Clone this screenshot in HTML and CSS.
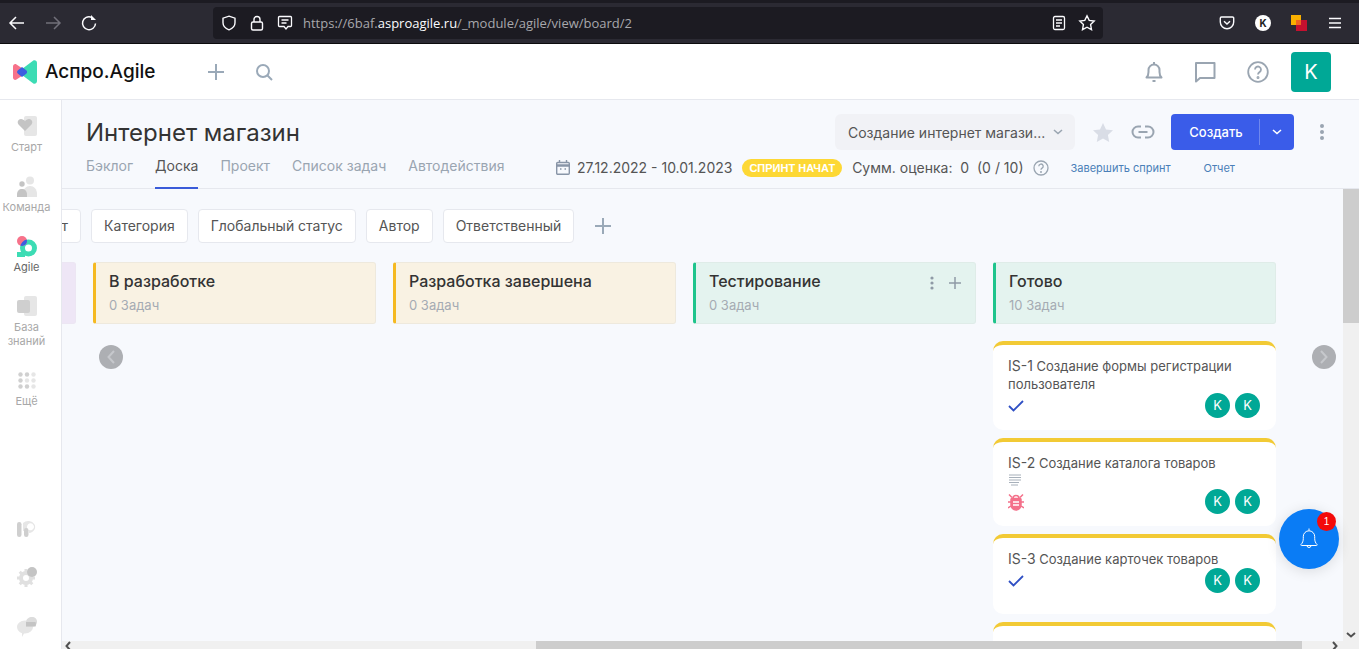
FILE: index.html
```html
<!DOCTYPE html>
<html lang="en">
<head>
    <meta charset="UTF-8">
    <meta name="viewport" content="width=device-width, initial-scale=1.0">
    <title>Аспро.Agile</title>
    <link rel="stylesheet" href="styles.css">
</head>
<body>
    <!-- browser toolbar -->
    <div class="browser">
        <div class="tabstrip"></div>
        <div class="toolbar">
            <div class="nav-btns">
                <svg width="18" height="18" viewBox="0 0 18 18" fill="none" stroke="#fbfbfe" stroke-width="1.5"><path d="M2 9h14M8 3L2 9l6 6"/></svg>
                <svg width="18" height="18" viewBox="0 0 18 18" fill="none" stroke="#71707a" stroke-width="1.5"><path d="M2 9h14M10 3l6 6-6 6"/></svg>
                <svg width="18" height="18" viewBox="0 0 18 18" fill="none" stroke="#fbfbfe" stroke-width="1.5"><path d="M15.5 9.5A6.5 6.5 0 1 1 11.5 3.2"/><path d="M11 1v5h5z" fill="#fbfbfe" stroke="none"/></svg>
            </div>
            <div class="urlbar">
                <div class="url-left">
                    <svg width="16" height="16" viewBox="0 0 16 16" fill="none" stroke="#fbfbfe" stroke-width="1.4"><path d="M8 1.2l6 2v4.6c0 3.4-2.6 5.8-6 7-3.400-1.200-6-3.600-6-7V3.200z"/></svg>
                    <svg width="16" height="16" viewBox="0 0 16 16" fill="none" stroke="#fbfbfe" stroke-width="1.4"><rect x="2.500" y="7" width="11" height="8" rx="1.500"/><path d="M5 7V4.500a3 3 0 0 1 6 0V7"/></svg>
                    <svg width="16" height="16" viewBox="0 0 16 16" fill="none" stroke="#fbfbfe" stroke-width="1.3"><path d="M2.500 1.500h11a1 1 0 0 1 1 1v8a1 1 0 0 1-1 1H11l-2 2.500-2-2.500H2.500a1 1 0 0 1-1-1v-8a1 1 0 0 1 1-1z"/><path d="M4.500 5h7M4.500 8h5"/></svg>
                    <span class="url-text">https://6baf.<b>asproagile.ru</b>/_module/agile/view/board/2</span>
                </div>
                <div class="url-right">
                    <svg width="16" height="16" viewBox="0 0 16 16" fill="none" stroke="#fbfbfe" stroke-width="1.3"><rect x="2.500" y="1.500" width="11" height="13" rx="1.500"/><path d="M5 5h6M5 8h6M5 11h4"/></svg>
                    <svg width="18" height="18" viewBox="0 0 18 18" fill="none" stroke="#fbfbfe" stroke-width="1.4"><path d="M9 1.800l2.200 4.600 5 .7-3.600 3.500.9 5L9 13.200l-4.500 2.400.9-5L1.800 7.100l5-.7z"/></svg>
                </div>
            </div>
            <div class="ext-btns">
                <svg width="16" height="16" viewBox="0 0 16 16" fill="none" stroke="#fbfbfe" stroke-width="1.4"><path d="M2.500 2h11a1.200 1.200 0 0 1 1.200 1.200V7a6.700 6.700 0 0 1-13.400 0V3.200A1.200 1.200 0 0 1 2.500 2z"/><path d="M5 6.200l3 2.800 3-2.800"/></svg>
                <span class="ext-k">K</span>
                <svg width="16" height="16" viewBox="0 0 16 16"><rect x="5" y="5" width="11" height="11" fill="#c5102f"/><rect x="0" y="0" width="10" height="10" fill="#f9b000"/><rect x="5" y="5" width="5" height="5" fill="#f0641e"/></svg>
                <svg width="16" height="12" viewBox="0 0 16 12" stroke="#fbfbfe" stroke-width="1.400"><path d="M2 1.500h12M2 6h12M2 10.500h12"/></svg>
            </div>
        </div>
    </div>

    <!-- app header -->
    <header class="app-header">
        <div class="logo">
            <svg width="24" height="24" viewBox="0 0 24 24"><path d="M0 6.500C0 4.500 2 3.500 3.500 4.500L11 9.500v5l-7.500 5C2 20.500 0 19.500 0 17.500z" fill="#f7728a"/><path d="M24 3C24 .8 21.800-.5 20 .8L9 9v6l11 8.200c1.800 1.300 4 0 4-2.200z" fill="#3cdcb4"/><path d="M9 7l4.200 3.200a2.200 2.200 0 0 1 0 3.600L9 17l-4-3.200a2.200 2.200 0 0 1 0-3.600z" fill="#3b5fe0"/></svg>
            <span class="logo-text">Аспро.Agile</span>
        </div>
        <svg class="hdr-plus" width="18" height="18" viewBox="0 0 18 18" stroke="#9aa9b8" stroke-width="2"><path d="M9 1v16M1 9h16"/></svg>
        <svg class="hdr-search" width="18" height="18" viewBox="0 0 18 18" fill="none" stroke="#9aa9b8" stroke-width="2"><circle cx="8" cy="8" r="6"/><path d="M12.500 12.500L17 17"/></svg>
        <div class="hdr-right">
            <svg width="18" height="22" viewBox="0 0 18 22" fill="none" stroke="#9aa5b1" stroke-width="2"><path d="M1.500 16.500c1.500-1.500 2-3 2-5.500V9a5.500 5.500 0 0 1 11 0v2c0 2.500.5 4 2 5.500z" stroke-linejoin="round"/><path d="M9 1v2M7.500 20h3"/></svg>
            <svg width="22" height="22" viewBox="0 0 22 22" fill="none" stroke="#9aa5b1" stroke-width="2"><path d="M2 2h18.500v15H6l-4 3.500z" stroke-linejoin="round"/></svg>
            <svg width="22" height="22" viewBox="0 0 22 22" fill="none" stroke="#9aa5b1" stroke-width="1.800"><circle cx="11" cy="11" r="9.800"/><path d="M8 8.500a3 3 0 1 1 4.500 2.600c-1 .6-1.500 1.100-1.500 2.400"/><circle cx="11" cy="16.500" r=".6"/></svg>
            <div class="user-avatar">K</div>
        </div>
    </header>

    <div class="workspace">
        <nav class="sidebar">
            <div class="side-top">
                <a class="side-item">
                    <svg width="20" height="21" viewBox="0 0 20 21"><rect x="7" y="0" width="13" height="20" rx="2" fill="#e6e6e6"/><path d="M8 15L1.500 8.500C-.5 6 1.500 3 4 3c1.800 0 3 1 4 2.200C9 4 10.200 3 12 3c2.500 0 4.500 3 2.500 5.500z" fill="#c4c4c4"/></svg>
                    <span>Старт</span>
                </a>
                <a class="side-item">
                    <svg width="20" height="21" viewBox="0 0 20 21"><circle cx="13" cy="4.500" r="4" fill="#e6e6e6"/><path d="M6 21v-3c0-5 3-8 7-8s7 3 7 8v3z" fill="#e6e6e6"/><circle cx="5" cy="8" r="2.700" fill="#c4c4c4"/><path d="M0 21v-2.500C0 15 2 13 5 13s5 2 5 5.500V21z" fill="#c4c4c4"/></svg>
                    <span>Команда</span>
                </a>
                <a class="side-item active">
                    <svg width="20" height="21" viewBox="0 0 20 21">
                        <clipPath id="agile-clip"><circle cx="5" cy="5" r="5"/></clipPath>
                        <circle cx="11.500" cy="12" r="6" fill="none" stroke="#3cdcb4" stroke-width="5"/>
                        <path d="M0 21v-5h8v5z" fill="#3cdcb4"/>
                        <circle cx="5" cy="5" r="5" fill="#f7728a"/>
                        <circle cx="11.500" cy="12" r="6" fill="none" stroke="#3b5fe0" stroke-width="5" clip-path="url(#agile-clip)"/>
                    </svg>
                    <span>Agile</span>
                </a>
                <a class="side-item">
                    <svg width="20" height="21" viewBox="0 0 20 21"><rect x="7" y="0" width="13" height="20" rx="2" fill="#e6e6e6"/><rect x="0" y="4" width="13" height="13" rx="2" fill="#cfcfcf"/></svg>
                    <span>База знаний</span>
                </a>
                <a class="side-item more">
                    <svg width="18" height="17" viewBox="0 0 18 17"><g fill="#d0d0d0"><circle cx="2.500" cy="2.500" r="2.200"/><circle cx="9" cy="2.500" r="2.200"/></g><g fill="#e6e6e6"><circle cx="15.500" cy="2.500" r="2.200"/><circle cx="9" cy="8.500" r="2.200"/><circle cx="15.500" cy="8.500" r="2.200"/><circle cx="15.500" cy="14.500" r="2.200"/></g><g fill="#d0d0d0"><circle cx="2.500" cy="8.500" r="2.200"/><circle cx="2.500" cy="14.500" r="2.200"/><circle cx="9" cy="14.500" r="2.200"/></g></svg>
                    <span>Ещё</span>
                </a>
            </div>
            <div class="side-bottom">
                <svg width="20" height="20" viewBox="0 0 20 20"><path d="M6 6a7 6 0 1 1 6 10V13a3.500 3.500 0 1 0-2-3v4H6z" fill="#e6e6e6"/><rect x="0" y="5" width="4.500" height="15" rx="2.200" fill="#cfcfcf"/><rect x="7" y="11" width="4.500" height="9" rx="2.200" fill="#cfcfcf"/></svg>
                <svg width="20" height="20" viewBox="0 0 20 20"><circle cx="9" cy="11" r="5" fill="none" stroke="#e0e0e0" stroke-width="4"/><g stroke="#e0e0e0" stroke-width="3"><path d="M9 2v3M9 17v3M0 11h3M15 11h3M2.700 4.700l2 2M2.700 17.300l2-2M15.300 17.300l-2-2"/></g><circle cx="15" cy="5" r="5" fill="#c4c4c4"/></svg>
                <svg width="20" height="20" viewBox="0 0 20 20"><path d="M8 3.500c4.500 0 8 3 8 6.500s-3.500 6.500-8 6.500H7L5 20v-3.700C2 15 0 12.800 0 10c0-3.500 3.500-6.500 8-6.500z" fill="#e6e6e6"/><path d="M15 0c3 0 5 2 5 4.700 0 2.800-2 4.800-5 4.800H9V5c0-3 3-5 6-5z" fill="#dcdcdc"/><path d="M9 5h9.500c.6 1.500.6 3 0 4.500H9z" fill="#c4c4c4"/></svg>
            </div>
        </nav>

        <main class="main">
            <section class="project-head">
                <div class="head-row">
                    <h1 class="project-title">Интернет магазин</h1>
                    <div class="head-actions">
                        <div class="sprint-select">
                            <span>Создание интернет магази...</span>
                            <svg width="10" height="6" viewBox="0 0 10 6" fill="none" stroke="#9aa5b1" stroke-width="1.600"><path d="M1 1l4 3.500L9 1"/></svg>
                        </div>
                        <svg class="star" width="20" height="19" viewBox="0 0 20 19" fill="#d9dde6"><path d="M10 0l3 6.400 7 .9-5.100 4.800 1.300 6.900L10 15.600 3.800 19l1.300-6.900L0 7.300l7-.9z"/></svg>
                        <svg class="link-ic" width="24" height="14" viewBox="0 0 24 14" fill="none" stroke="#9aa5b1" stroke-width="2"><path d="M10 1.500H7a5.500 5.500 0 0 0 0 11h3M14 1.500h3a5.500 5.500 0 0 1 0 11h-3M7.500 7h9"/></svg>
                        <div class="create-btn">
                            <span class="create-label">Создать</span>
                            <span class="create-arrow"><svg width="10" height="6" viewBox="0 0 10 6" fill="none" stroke="#fff" stroke-width="1.600"><path d="M1 1l4 3.500L9 1"/></svg></span>
                        </div>
                        <svg class="dots" width="6" height="16" viewBox="0 0 6 16" fill="#9aa5b1"><circle cx="3" cy="2" r="2"/><circle cx="3" cy="8" r="2"/><circle cx="3" cy="14" r="2"/></svg>
                    </div>
                </div>
                <div class="head-row tabs-row">
                    <div class="tabs">
                        <a class="tab">Бэклог</a>
                        <a class="tab active">Доска</a>
                        <a class="tab">Проект</a>
                        <a class="tab">Список задач</a>
                        <a class="tab">Автодействия</a>
                    </div>
                    <div class="sprint-meta">
                        <svg width="14" height="15" viewBox="0 0 14 15" fill="none" stroke="#8895a7" stroke-width="1.400"><rect x=".7" y="2.500" width="12.600" height="11.800" rx="1"/><path d="M.7 5.500h12.600" stroke-width="2.500"/><path d="M3.500 0v3M10.500 0v3M4 9h1.500M8.500 9H10"/></svg>
                        <span class="dates">27.12.2022 - 10.01.2023</span>
                        <span class="badge">СПРИНТ НАЧАТ</span>
                        <span class="estimate">Сумм. оценка:&nbsp; 0 &nbsp;(0 / 10)</span>
                        <svg class="est-help" width="16" height="16" viewBox="0 0 16 16" fill="none" stroke="#9aa5b1" stroke-width="1.300"><circle cx="8" cy="8" r="7"/><path d="M5.800 6.200a2.200 2.200 0 1 1 3.300 1.900c-.7.400-1.100.8-1.100 1.700"/><circle cx="8" cy="12" r=".4"/></svg>
                        <a class="meta-link finish">Завершить спринт</a>
                        <a class="meta-link">Отчет</a>
                    </div>
                </div>
            </section>

            <div class="board-wrap">
                <section class="board">
                    <div class="filters">
                        <span class="chip">Спринт</span>
                        <span class="chip">Категория</span>
                        <span class="chip">Глобальный статус</span>
                        <span class="chip">Автор</span>
                        <span class="chip">Ответственный</span>
                        <svg class="add-filter" width="18" height="18" viewBox="0 0 18 18" stroke="#9aa9b8" stroke-width="2"><path d="M9 1v16M1 9h16"/></svg>
                    </div>
                    <div class="columns">
                        <div class="column">
                            <div class="col-head purple"></div>
                        </div>
                        <div class="column">
                            <div class="col-head orange">
                                <div class="col-title">В разработке</div>
                                <div class="col-count">0 Задач</div>
                            </div>
                        </div>
                        <div class="column">
                            <div class="col-head orange">
                                <div class="col-title">Разработка завершена</div>
                                <div class="col-count">0 Задач</div>
                            </div>
                        </div>
                        <div class="column">
                            <div class="col-head green">
                                <div class="col-title">Тестирование</div>
                                <div class="col-count">0 Задач</div>
                                <div class="col-tools">
                                    <svg width="4" height="14" viewBox="0 0 4 14" fill="#8f9aa6"><circle cx="2" cy="2" r="1.600"/><circle cx="2" cy="7" r="1.600"/><circle cx="2" cy="12" r="1.600"/></svg>
                                    <svg width="12" height="12" viewBox="0 0 12 12" stroke="#8f9aa6" stroke-width="1.500"><path d="M6 0v12M0 6h12"/></svg>
                                </div>
                            </div>
                        </div>
                        <div class="column">
                            <div class="col-head green">
                                <div class="col-title">Готово</div>
                                <div class="col-count">10 Задач</div>
                            </div>
                            <div class="cards">
                                <div class="card h89">
                                    <div class="card-text"><b>IS-1</b> Создание формы регистрации пользователя</div>
                                    <div class="card-foot">
                                        <svg class="check" width="16" height="12" viewBox="0 0 16 12" fill="none" stroke="#2f4fc4" stroke-width="1.800"><path d="M1 6l4.500 4.500L15 1"/></svg>
                                        <div class="assignees"><span class="ava">K</span><span class="ava">K</span></div>
                                    </div>
                                </div>
                                <div class="card h88">
                                    <div class="card-text"><b>IS-2</b> Создание каталога товаров</div>
                                    <svg class="desc-ic" width="14" height="12" viewBox="0 0 14 12" stroke="#a7b0ba" stroke-width="1"><path d="M1 1h12M1 3.500h12M1 6h12M1 8.500h10M3 11h7"/></svg>
                                    <div class="card-foot up">
                                        <svg width="16" height="18" viewBox="0 0 16 18" fill="none" stroke="#f4708a" stroke-width="1.500"><path d="M4 5.500h8a1 1 0 0 1 1 1V12a5 5 0 0 1-10 0V6.500a1 1 0 0 1 1-1z" fill="#f4708a"/><path d="M5 5.500a3 3 0 0 1 6 0M1 1.500l3 3M15 1.500l-3 3M0 9h3M13 9h3M0 15l3-2M16 15l-3-2"/><path d="M5 9h6M5 12h6" stroke="#fff"/></svg>
                                        <div class="assignees"><span class="ava">K</span><span class="ava">K</span></div>
                                    </div>
                                </div>
                                <div class="card h80">
                                    <div class="card-text"><b>IS-3</b> Создание карточек товаров</div>
                                    <div class="card-foot">
                                        <svg class="check" width="16" height="12" viewBox="0 0 16 12" fill="none" stroke="#2f4fc4" stroke-width="1.800"><path d="M1 6l4.500 4.500L15 1"/></svg>
                                        <div class="assignees"><span class="ava">K</span><span class="ava">K</span></div>
                                    </div>
                                </div>
                                <div class="card h80"></div>
                            </div>
                        </div>
                    </div>
                    <span class="board-arrow prev"><svg width="8" height="14" viewBox="0 0 8 14" fill="none" stroke="#c6c8cc" stroke-width="2"><path d="M7 1L1.500 7 7 13"/></svg></span>
                    <span class="board-arrow next"><svg width="8" height="14" viewBox="0 0 8 14" fill="none" stroke="#c6c8cc" stroke-width="2"><path d="M1 1l5.500 6L1 13"/></svg></span>
                </section>
                <div class="vscroll">
                    <div class="vthumb"></div>
                    <svg class="v-down" width="10" height="6" viewBox="0 0 10 6" fill="none" stroke="#505050" stroke-width="2"><path d="M1 1l4 3.500L9 1"/></svg>
                </div>
            </div>
            <div class="hscroll">
                <svg width="6" height="10" viewBox="0 0 6 10" fill="none" stroke="#505050" stroke-width="2"><path d="M5 1L1.500 5 5 9"/></svg>
                <div class="hthumb"></div>
                <svg width="6" height="10" viewBox="0 0 6 10" fill="none" stroke="#505050" stroke-width="2"><path d="M1 1l3.500 4L1 9"/></svg>
            </div>
        </main>
    </div>

    <div class="notify-fab">
        <svg width="20" height="24" viewBox="0 0 20 24" fill="none" stroke="#fff" stroke-width="1"><path d="M2 17.500c1.500-1.500 2.300-3.500 2.300-6V9.500a5.700 5.700 0 0 1 11.400 0v2c0 2.500.8 4.500 2.300 6 .4.500.2 1-.5 1H2.500c-.7 0-.9-.5-.5-1z"/><path d="M10 1.500v2M8 18.500a2 2 0 0 0 4 0"/></svg>
        <span class="fab-count">1</span>
    </div>
</body>
</html>
```

FILE: styles.css
```css
* {
    box-sizing: border-box;
}
html, body {
    height: 100%;
}
body {
    margin: 0;
    display: flex;
    flex-direction: column;
    overflow: hidden;
    font-family: Inter, "Noto Sans", sans-serif;
    color: #333;
    background-color: #fff;
}
svg {
    display: block;
    flex-shrink: 0;
}

/* browser toolbar */
.browser {
    height: 44px;
    flex-shrink: 0;
    background-color: #2b2a33;
    border-bottom: 1px solid #0c0c0d;
}
.tabstrip {
    height: 3px;
    background-color: #1c1b22;
}
.toolbar {
    height: 40px;
    display: flex;
    align-items: center;
    padding-left: 8px;
}
.nav-btns {
    display: flex;
    flex-shrink: 0;
    gap: 18px;
    width: 205px;
}
.urlbar {
    width: 890px;
    height: 32px;
    flex-shrink: 0;
    display: flex;
    align-items: center;
    justify-content: space-between;
    padding: 0 7px 0 8px;
    background-color: #1c1b22;
    border-radius: 4px;
}
.url-left {
    display: flex;
    align-items: center;
    gap: 12px;
}
.url-text {
    font-family: "Open Sans", sans-serif;
    font-size: 13px;
    color: #a8a8ac;
    margin-left: -2px;
}
.url-text b {
    font-weight: 400;
    color: #fbfbfe;
}
.url-right {
    display: flex;
    align-items: center;
    gap: 11px;
}
.ext-btns {
    display: flex;
    align-items: center;
    gap: 20px;
    margin-left: 116px;
}
.ext-k {
    width: 16px;
    height: 16px;
    border-radius: 50%;
    background-color: #fff;
    color: #222;
    font-size: 10px;
    font-weight: 700;
    line-height: 16px;
    text-align: center;
}

/* app header */
.app-header {
    height: 56px;
    flex-shrink: 0;
    display: flex;
    align-items: center;
    padding: 0 28px 0 13px;
    border-bottom: 1px solid #e6e8ee;
}
.logo {
    display: flex;
    align-items: center;
    gap: 8px;
    width: 194px;
}
.logo-text {
    font-size: 19px;
    font-weight: 500;
    color: #111;
}
.hdr-search {
    margin-left: 30px;
}
.hdr-right {
    margin-left: auto;
    display: flex;
    align-items: center;
    gap: 31px;
}
.user-avatar {
    width: 40px;
    height: 40px;
    margin-left: -9px;
    border-radius: 4px;
    background-color: #00a896;
    color: #fff;
    font-size: 20px;
    line-height: 40px;
    text-align: center;
}

/* sidebar */
.workspace {
    flex: 1;
    min-height: 0;
    display: flex;
}
.sidebar {
    width: 62px;
    flex-shrink: 0;
    display: flex;
    flex-direction: column;
    justify-content: space-between;
    padding: 16px 8px 12px 0;
    border-right: 1px solid #e6e8ee;
    background-color: #fff;
}
.side-top {
    display: flex;
    flex-direction: column;
}
.side-item {
    height: 60px;
    display: flex;
    flex-direction: column;
    align-items: center;
    gap: 3px;
    font-size: 11px;
    line-height: 14px;
    color: #a8a8a8;
    text-align: center;
}
.side-item.active {
    color: #666;
}
.side-item.more {
    margin-top: 16px;
    gap: 5px;
}
.side-bottom {
    display: flex;
    flex-direction: column;
    align-items: center;
    gap: 30px;
}

/* project head */
.main {
    flex: 1;
    min-width: 0;
    display: flex;
    flex-direction: column;
    background-color: #f7f9fd;
}
.project-head {
    height: 89px;
    flex-shrink: 0;
    padding: 14px 34px 0 24px;
    border-bottom: 1px solid #e6e8ee;
}
.head-row {
    display: flex;
    align-items: center;
    justify-content: space-between;
}
.project-title {
    margin: 0;
    font-size: 24px;
    font-weight: 400;
    color: #333;
}
.head-actions {
    display: flex;
    align-items: center;
}
.sprint-select {
    width: 240px;
    height: 36px;
    display: flex;
    align-items: center;
    justify-content: space-between;
    padding: 0 12px 0 13px;
    background-color: #f1f2f6;
    border-radius: 6px;
    font-size: 14px;
    color: #555;
}
.star {
    margin-left: 18px;
}
.link-ic {
    margin-left: 18px;
}
.create-btn {
    width: 123px;
    height: 36px;
    margin-left: 16px;
    display: flex;
    align-items: center;
    background-color: #3a5ce9;
    border-radius: 4px;
    color: #fff;
    font-size: 13px;
    font-weight: 500;
}
.create-label {
    width: 88px;
    padding-left: 2px;
    text-align: center;
}
.create-arrow {
    height: 26px;
    flex: 1;
    display: flex;
    align-items: center;
    justify-content: center;
    border-left: 1px solid #6f88ee;
}
.dots {
    margin-left: 25px;
}
.tabs-row {
    height: 39px;
}
.tabs {
    display: flex;
    gap: 22px;
    align-self: stretch;
}
.tab {
    height: 39px;
    padding-top: 7px;
    font-size: 14px;
    line-height: 17px;
    color: #9aa5b1;
}
.tab.active {
    color: #555;
    border-bottom: 2px solid #3a5bd9;
}
.sprint-meta {
    display: flex;
    align-items: center;
    margin: 0 90px 4px 0;
    font-size: 14px;
    color: #555;
}
.dates {
    margin-left: 7px;
}
.badge {
    height: 18px;
    margin-left: 10px;
    padding: 0 7px;
    background-color: #fdd835;
    border-radius: 9px;
    color: #fff;
    font-family: "Liberation Sans", sans-serif;
    font-size: 11px;
    font-weight: 700;
    line-height: 18px;
}
.estimate {
    margin-left: 10px;
}
.est-help {
    margin-left: 9px;
}
.meta-link {
    margin-left: 33px;
    font-size: 11px;
    color: #4a7fb8;
}
.meta-link.finish {
    margin-left: 22px;
}

/* board */
.board-wrap {
    flex: 1;
    min-height: 0;
    display: flex;
}
.board {
    flex: 1;
    min-width: 0;
    position: relative;
    overflow: hidden;
    padding-top: 20px;
}
.filters {
    display: flex;
    align-items: center;
    gap: 10px;
    margin-left: -57px;
}
.chip {
    height: 34px;
    padding: 0 12px;
    background-color: #fff;
    border: 1px solid #e6e8ee;
    border-radius: 4px;
    font-size: 14px;
    line-height: 32px;
    color: #555;
}
.add-filter {
    margin-left: 10px;
}
.columns {
    display: flex;
    gap: 17px;
    margin-top: 19px;
    margin-left: -269px;
}
.column {
    width: 283px;
    flex-shrink: 0;
}
.col-head {
    position: relative;
    height: 62px;
    padding: 8px 12px 0 13px;
    border: 1px solid #ebedf0;
    border-left: 3px solid transparent;
    border-radius: 3px;
}
.col-head.purple {
    background-color: #eee6f6;
    border-color: #ece6f3;
}
.col-head.orange {
    background-color: #f9f2e3;
    border-color: #eee9dd;
    border-left-color: #f5b921;
}
.col-head.green {
    background-color: #e4f3ef;
    border-color: #dfece8;
    border-left-color: #1fc48c;
}
.col-title {
    font-size: 16px;
    font-weight: 500;
    line-height: 20px;
    color: #333;
}
.col-count {
    margin-top: 6px;
    font-size: 13px;
    line-height: 16px;
    color: #a5abb3;
}
.col-tools {
    position: absolute;
    top: 13px;
    right: 14px;
    display: flex;
    align-items: center;
    gap: 15px;
}
.cards {
    display: flex;
    flex-direction: column;
    gap: 8px;
    margin-top: 17px;
}
.card {
    padding: 12px 15px 0;
    background-color: #fff;
    border-top: 4px solid #f2ca35;
    border-radius: 10px;
}
.h89 {
    height: 89px;
}
.h88 {
    height: 88px;
}
.h80 {
    height: 80px;
}
.card-text {
    font-size: 13px;
    line-height: 18px;
    color: #555;
}
.card-text b {
    font-size: 14px;
    font-weight: 400;
}
.card-foot {
    display: flex;
    align-items: center;
    justify-content: space-between;
    padding-right: 1px;
}
.card-foot.up {
    margin-top: 3px;
}
.desc-ic {
    margin-top: 2px;
}
.assignees {
    display: flex;
    gap: 5px;
}
.ava {
    width: 25px;
    height: 25px;
    border-radius: 50%;
    background-color: #00a896;
    color: #fff;
    font-size: 13px;
    line-height: 25px;
    text-align: center;
}
.board-arrow {
    position: absolute;
    top: 156px;
    width: 24px;
    height: 24px;
    display: flex;
    align-items: center;
    justify-content: center;
    border-radius: 50%;
    background-color: #adafb3;
}
.board-arrow.prev {
    left: 37px;
}
.board-arrow.next {
    left: 1250px;
}

/* scrollbars */
.vscroll {
    width: 16px;
    flex-shrink: 0;
    position: relative;
    background-color: #f0f0f0;
}
.vthumb {
    height: 134px;
    background-color: #cdcdcd;
}
.v-down {
    position: absolute;
    left: 3px;
    bottom: 3px;
}
.hscroll {
    height: 8px;
    flex-shrink: 0;
    display: flex;
    background-color: #f0f0f0;
    padding-left: 3px;
    overflow: hidden;
}
.hthumb {
    width: 766px;
    height: 8px;
    margin-left: 465px;
    margin-right: 30px;
    background-color: #cdcdcd;
}

/* floating button */
.notify-fab {
    position: fixed;
    left: 1279px;
    top: 509px;
    width: 60px;
    height: 60px;
    display: flex;
    align-items: center;
    justify-content: center;
    border-radius: 50%;
    background-color: #0a7cf5;
    box-shadow: 0 2px 14px rgba(0, 0, 0, 0.12);
}
.fab-count {
    position: absolute;
    top: 3px;
    right: 3px;
    width: 19px;
    height: 19px;
    border-radius: 50%;
    background-color: #f30a0a;
    color: #fff;
    font-family: "Liberation Sans", sans-serif;
    font-size: 10px;
    line-height: 19px;
    text-align: center;
}
```
